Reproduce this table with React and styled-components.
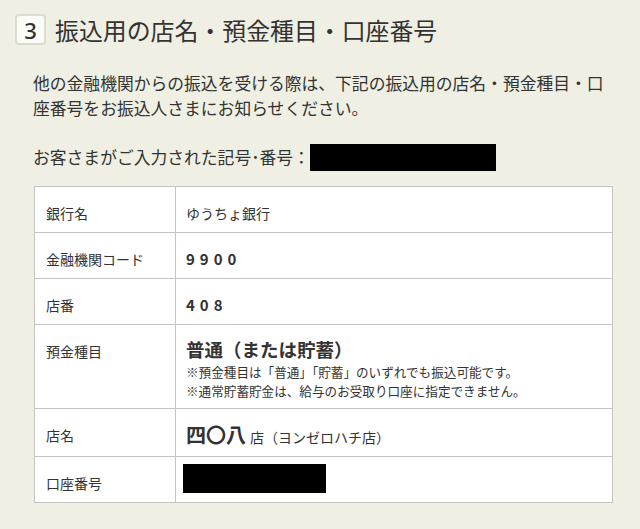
import React from "react";
import styled, { createGlobalStyle } from "styled-components";

const GlobalStyle = createGlobalStyle`
  body {
    margin: 0;
    background: #efefe3;
    color: #333;
    font-family: "Noto Sans CJK JP", "Noto Sans", sans-serif;
  }
`;

const Page = styled.div`
  width: 640px;
  height: 529px;
  box-sizing: border-box;
  padding: 14px 27px 0 15px;
`;

const Header = styled.div`
  display: flex;
  align-items: center;
  gap: 9px;
  height: 31px;
`;

const StepBadge = styled.span`
  width: 31px;
  height: 31px;
  box-sizing: border-box;
  display: flex;
  align-items: center;
  justify-content: center;
  background: #fbfbf8;
  border: 2px solid #dcdccf;
  border-radius: 4px;
  font-family: "Noto Sans", "Liberation Sans", sans-serif;
  font-size: 22px;
  font-weight: 500;
  color: #333;
`;

const Title = styled.h2`
  margin: 0;
  font-size: 23.9px;
  font-weight: 400;
  color: #333;
  line-height: 31px;
`;

const Content = styled.div`
  padding-left: 18px;
`;

const Lead = styled.p`
  margin: 26px 0 0;
  width: 582px;
  font-size: 16.8px;
  line-height: 25px;
`;

const NumberLine = styled.p`
  margin: 23px 0 0;
  font-size: 16.8px;
  line-height: 27px;
  display: flex;
  align-items: center;
`;

const Redacted = styled.span`
  display: inline-block;
  width: ${(p) => p.$w}px;
  height: ${(p) => p.$h}px;
  margin-left: ${(p) => p.$shift || 0}px;
  background: #000;
  vertical-align: middle;
`;

const Table = styled.table`
  margin: 15px 0 0 1px;
  width: 579px;
  border-collapse: collapse;
  table-layout: fixed;
  background: #fff;
`;

const Label = styled.th`
  width: 141px;
  box-sizing: border-box;
  border: 1px solid #c4c4c4;
  padding: 15px 10px 8px 11px;
  text-align: left;
  vertical-align: top;
  font-size: 14px;
  font-weight: 400;
  line-height: 22px;
`;

const Value = styled.td`
  border: 1px solid #c4c4c4;
  padding: ${(p) => (p.$tight ? "7px 10px 8px" : "15px 10px 8px")};
  vertical-align: top;
  font-size: 14px;
  line-height: 22px;
`;

const Code = styled.span`
  font-size: 15px;
  font-weight: 700;
  letter-spacing: 5px;
`;

const TypeHead = styled.div`
  font-size: 18.5px;
  font-weight: 700;
  line-height: 22px;
  margin-top: -2px;
`;

const Notes = styled.div`
  margin-top: 2px;
  font-size: 12.6px;
  line-height: 19px;
`;

const BranchName = styled.span`
  font-size: 20px;
  font-weight: 700;
  margin-right: 4px;
`;

const rows = [
  { label: "銀行名", value: "ゆうちょ銀行" },
  { label: "金融機関コード", value: <Code>9900</Code> },
  { label: "店番", value: <Code>408</Code> },
  {
    label: "預金種目",
    value: (
      <>
        <TypeHead>普通（または貯蓄）</TypeHead>
        <Notes>
          ※預金種目は「普通」「貯蓄」のいずれでも振込可能です。
          <br />
          ※通常貯蓄貯金は、給与のお受取り口座に指定できません。
        </Notes>
      </>
    ),
  },
  {
    label: "店名",
    value: (
      <>
        <BranchName>四〇八</BranchName>店（ヨンゼロハチ店）
      </>
    ),
  },
  { label: "口座番号", value: <Redacted $w={143} $h={29} $shift={-3} />, tight: true },
];

export default function App() {
  return (
    <Page>
      <GlobalStyle />
      <Header>
        <StepBadge>3</StepBadge>
        <Title>振込用の店名・預金種目・口座番号</Title>
      </Header>
      <Content>
        <Lead>
          他の金融機関からの振込を受ける際は、下記の振込用の店名・預金種目・口座番号をお振込人さまにお知らせください。
        </Lead>
        <NumberLine>
          お客さまがご入力された記号･番号：
          <Redacted $w={186} $h={27} />
        </NumberLine>
        <Table>
          <tbody>
            {rows.map((r) => (
              <tr key={r.label}>
                <Label>{r.label}</Label>
                <Value $tight={r.tight}>{r.value}</Value>
              </tr>
            ))}
          </tbody>
        </Table>
      </Content>
    </Page>
  );
}
